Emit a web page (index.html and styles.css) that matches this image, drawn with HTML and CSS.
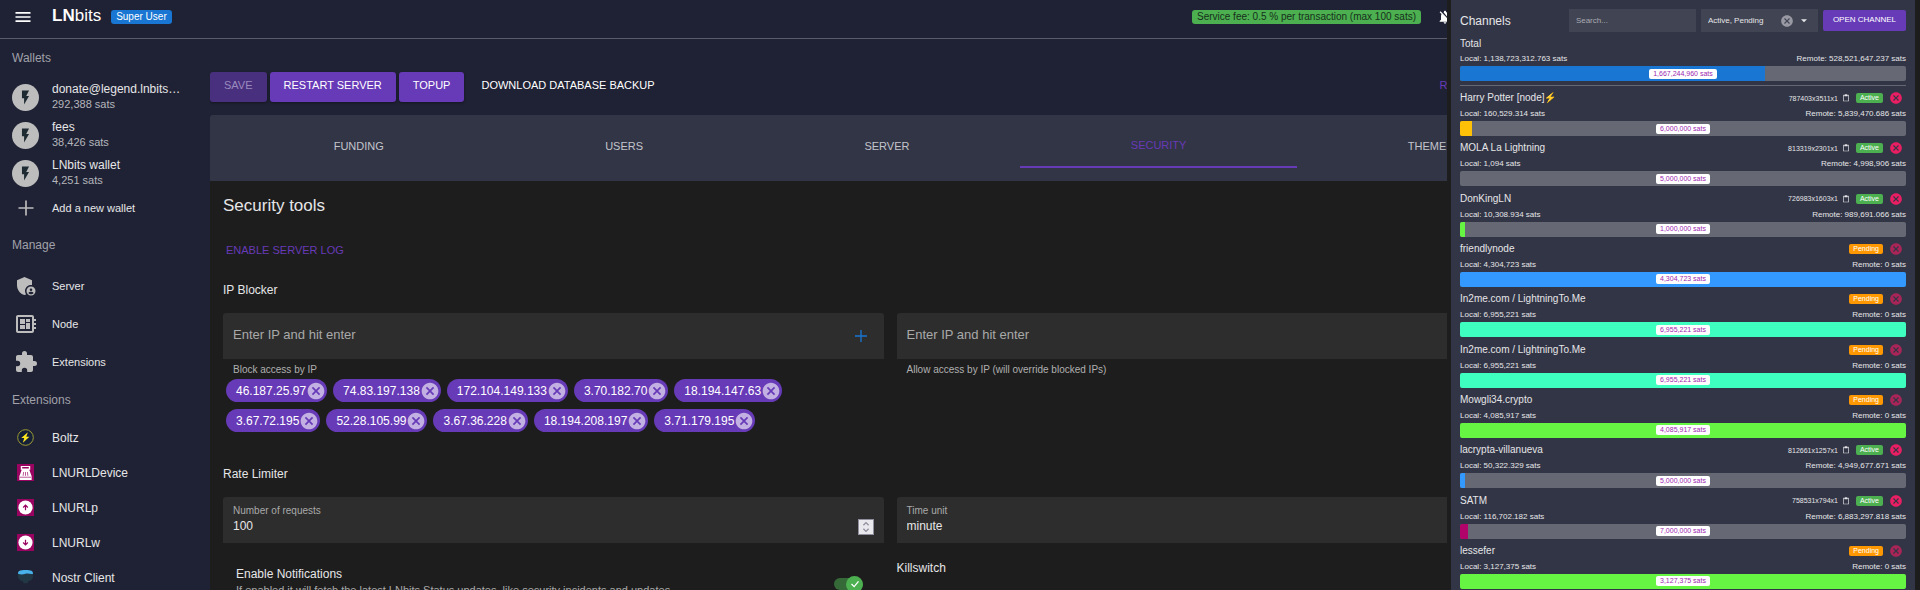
FILE: index.html
```html
<!DOCTYPE html>
<html lang="en">
<head>
<meta charset="utf-8">
<title>LNbits</title>
<link rel="stylesheet" href="styles.css">
</head>
<body>
<svg class="defs" aria-hidden="true">
  <symbol id="bolt" viewBox="0 0 24 24"><path d="M7 2v11h3v9l7-12h-4l4-8z"/></symbol>
  <symbol id="plus" viewBox="0 0 24 24"><path d="M21 13h-8v8h-2v-8H3v-2h8V3h2v8h8z"/></symbol>
  <symbol id="cancel" viewBox="0 0 24 24"><path d="M12 2C6.47 2 2 6.47 2 12s4.47 10 10 10 10-4.47 10-10S17.53 2 12 2zm5 13.59L15.59 17 12 13.41 8.41 17 7 15.59 10.59 12 7 8.41 8.41 7 12 10.59 15.59 7 17 8.41 13.41 12 17 15.59z"/></symbol>
  <symbol id="clip" viewBox="0 0 24 24"><path d="M19 2h-4.18C14.4.84 13.3 0 12 0S9.6.84 9.18 2H5c-1.1 0-2 .9-2 2v16c0 1.100.9 2 2 2h14c1.100 0 2-.9 2-2V4c0-1.100-.9-2-2-2zm0 18H5V4h2v3h10V4h2z"/></symbol>
</svg>
<div class="app">
  <header class="topbar">
    <button class="menu" type="button" aria-label="Menu"><svg viewBox="0 0 24 24"><path d="M3 18h18v-2H3zm0-5h18v-2H3zm0-7v2h18V6z"/></svg></button>
    <a class="brand" href="#"><b>LN</b>bits</a>
    <span class="badge user">Super User</span>
    <span class="badge fee">Service fee: 0.5 % per transaction (max 100 sats)</span>
    <button class="bell" type="button" aria-label="Notifications off"><svg viewBox="0 0 24 24"><path d="M20 18.690L7.840 6.140 5.270 3.490 4 4.760l2.800 2.800v.010c-.520.990-.8 2.160-.8 3.420v5l-2 2v1h13.730l2 2L21 19.720zM12 22c1.110 0 2-.89 2-2h-4c0 1.110.89 2 2 2zm6-7.320V11c0-3.080-1.640-5.640-4.500-6.320V4c0-.83-.67-1.500-1.500-1.500s-1.500.67-1.500 1.500v.68c-.24.06-.47.15-.69.23z"/></svg></button>
  </header>

  <nav class="sidebar">
    <h2>Wallets</h2>
    <ul class="wallets">
      <li><a href="#"><span class="avatar"><svg><use href="#bolt"/></svg></span><span><strong>donate@legend.lnbits…</strong><small>292,388 sats</small></span></a></li>
      <li><a href="#"><span class="avatar"><svg><use href="#bolt"/></svg></span><span><strong>fees</strong><small>38,426 sats</small></span></a></li>
      <li><a href="#"><span class="avatar"><svg><use href="#bolt"/></svg></span><span><strong>LNbits wallet</strong><small>4,251 sats</small></span></a></li>
      <li class="new"><a href="#"><span class="slot"><svg class="plus"><use href="#plus"/></svg></span><em>Add a new wallet</em></a></li>
    </ul>
    <h2 class="manage-title">Manage</h2>
    <ul class="manage">
      <li><a href="#"><span class="slot"><svg viewBox="0 0 24 24"><path d="M17 11c.34 0 .67.04 1 .090V6.270L10.500 3 3 6.270v4.910c0 4.540 3.200 8.790 7.500 9.820.55-.13 1.080-.32 1.600-.55A5.990 5.990 0 0 1 11 17c0-3.310 2.690-6 6-6z"/><path fill-rule="evenodd" d="M17 12.500a4.500 4.500 0 1 0 0 9 4.500 4.500 0 0 0 0-9zm0 2a1.300 1.300 0 1 1 0 2.600 1.300 1.300 0 0 1 0-2.600zm0 5.800c-1.100 0-2-.5-2.600-1.400.1-.8 1.700-1.200 2.600-1.200s2.500.4 2.600 1.200c-.6.9-1.500 1.400-2.600 1.400z"/></svg></span><em>Server</em></a></li>
      <li><a href="#"><span class="slot"><svg viewBox="0 0 24 24"><path d="M22 9V7h-2V5c0-1.100-.9-2-2-2H4c-1.100 0-2 .9-2 2v14c0 1.100.9 2 2 2h14c1.100 0 2-.9 2-2v-2h2v-2h-2v-2h2v-2h-2V9zm-4 10H4V5h14zM6 13h5v4H6zm6-6h4v3h-4zM6 7h5v5H6zm6 4h4v6h-4z"/></svg></span><em>Node</em></a></li>
      <li><a href="#"><span class="slot"><svg viewBox="0 0 24 24"><path d="M20.500 11H19V7c0-1.100-.9-2-2-2h-4V3.500a2.500 2.500 0 0 0-5 0V5H4c-1.100 0-2 .9-2 2v3.800h1.500a2.700 2.700 0 0 1 0 5.400H2V20c0 1.100.9 2 2 2h3.800v-1.500a2.700 2.700 0 0 1 5.400 0V22H17c1.100 0 2-.9 2-2v-4h1.500a2.500 2.500 0 0 0 0-5z"/></svg></span><em>Extensions</em></a></li>
    </ul>
    <h2 class="exts-title">Extensions</h2>
    <ul class="exts">
      <li><a href="#"><span class="slot"><svg viewBox="0 0 18 18"><circle cx="9" cy="9" r="8.300" fill="#142038" stroke="#a5a033"/><path fill="#ffe81f" d="M11.500 3.500L4.500 9.600h3.200l-1.500 5 7-6.500h-3.400z"/></svg></span>Boltz</a></li>
      <li><a href="#"><span class="slot"><svg viewBox="0 0 18 18"><path fill="#98045f" d="M0 0h18v18H0z"/><path fill="#fff" fill-rule="evenodd" d="M4 2h10v4h-1l2.500 7v4h-13v-4L5 6H4zm1.500 1.200v1.600h7V3.200z"/><path stroke="#98045f" stroke-width=".7" d="M7 8.500l-.5 4M9 8.500v4M11 8.500l.5 4M3 14h12"/></svg></span>LNURLDevice</a></li>
      <li><a href="#"><span class="slot"><svg viewBox="0 0 18 18"><path fill="#98045f" d="M0 0h18v18H0z"/><circle cx="9" cy="9" r="7.500" fill="#fff"/><path fill="none" stroke="#98045f" stroke-width="1.300" d="M9 12V7M6.500 9L9 6.500 11.500 9"/></svg></span>LNURLp</a></li>
      <li><a href="#"><span class="slot"><svg viewBox="0 0 18 18"><path fill="#98045f" d="M0 0h18v18H0z"/><circle cx="9" cy="9" r="7.500" fill="#fff"/><path fill="none" stroke="#98045f" stroke-width="1.300" d="M9 6v5M6.500 9L9 11.500 11.500 9"/></svg></span>LNURLw</a></li>
      <li><a href="#"><span class="slot"><svg viewBox="0 0 18 18"><path fill="#213744" d="M1 4h16v5l-2 3-3 1-1 2H7l-1-2-3-1-2-3z"/><path fill="#49b1ea" d="M1 5c0-3 2-4 8-4s8 1 8 4c-3 1-5-1-8 0s-5 1-8 0z"/></svg></span>Nostr Client</a></li>
    </ul>
  </nav>

  <main class="main">
    <div class="actions">
      <button class="btn" type="button" disabled>SAVE</button>
      <button class="btn" type="button">RESTART SERVER</button>
      <button class="btn" type="button">TOPUP</button>
      <button class="btn flat" type="button">DOWNLOAD DATABASE BACKUP</button>
      <button class="btn flat reset" type="button">RESET TO DEFAULTS</button>
    </div>
    <div class="tabs" role="tablist">
      <button type="button" role="tab">FUNDING</button>
      <button type="button" role="tab">USERS</button>
      <button type="button" role="tab">SERVER</button>
      <button type="button" role="tab" aria-selected="true">SECURITY</button>
      <button type="button" role="tab">THEME</button>
    </div>
    <section class="panel">
      <h1>Security tools</h1>
      <button class="log" type="button">ENABLE SERVER LOG</button>
      <h3>IP Blocker</h3>
      <div class="pair">
        <div>
          <div class="field"><input type="text" aria-label="Blocked IP" aria-describedby="block-hint" placeholder="Enter IP and hit enter"><button class="add" type="button" aria-label="Add"><svg><use href="#plus"/></svg></button></div>
          <p class="hint" id="block-hint">Block access by IP</p>
          <div class="chips" id="chips"></div>
        </div>
        <div>
          <div class="field"><input type="text" aria-label="Allowed IP" aria-describedby="allow-hint" placeholder="Enter IP and hit enter"></div>
          <p class="hint" id="allow-hint">Allow access by IP (will override blocked IPs)</p>
        </div>
      </div>
      <h3>Rate Limiter</h3>
      <div class="pair">
        <div class="field stacked"><div><label for="requests">Number of requests</label><input id="requests" type="number" value="100"></div><button class="spin" type="button" aria-label="Change number"><svg viewBox="0 0 16 16"><path d="M5 6l3-3 3 3M5 10l3 3 3-3"/></svg></button></div>
        <div class="field stacked"><div><label for="unit">Time unit</label><select id="unit"><option>minute</option></select></div></div>
      </div>
      <div class="pair last">
        <div class="notify">
          <label for="notify"><strong>Enable Notifications</strong><small>If enabled it will fetch the latest LNbits Status updates, like security incidents and updates.</small></label>
          <span class="switch"><input id="notify" type="checkbox" checked><svg viewBox="0 0 16 16"><path d="M4 8l3 3 5-6"/></svg></span>
        </div>
        <h3>Killswitch</h3>
      </div>
    </section>
  </main>

  <aside class="channels">
    <div class="chan-head">
      <h2>Channels</h2>
      <input class="search" type="text" placeholder="Search..." aria-label="Search channels">
      <div class="filter"><select aria-label="Channel state"><option>Active, Pending</option></select><button type="button" aria-label="Clear"><svg><use href="#cancel"/></svg></button><svg class="caret" viewBox="0 0 10 10"><path d="M0 2h10L5 7z"/></svg></div>
      <button class="open" type="button">OPEN CHANNEL</button>
    </div>
    <div class="total" id="total"></div>
    <div class="list" id="list"></div>
  </aside>
</div>
<script src="app.js"></script>
</body>
</html>
```
FILE: styles.css
```css
* { box-sizing: border-box; }
body { margin: 0; font-family: "Liberation Sans", Arial, sans-serif; font-size: 12px; color: #e6e6e8; background: #1d1d1d; overflow: hidden; }
h1, h2, h3, p, ul { margin: 0; padding: 0; font-weight: 400; }
ul { list-style: none; }
a { color: inherit; text-decoration: none; }
svg { display: block; fill: currentColor; }
button, input, select { font: inherit; color: inherit; background: none; border: 0; margin: 0; padding: 0; outline: 0; appearance: none; }
.defs { display: none; }

.app { display: grid; grid-template-columns: 210px minmax(0, 1fr) 464px 5px; grid-template-rows: 39px minmax(0, 1fr); height: 100vh; overflow: hidden; }

.topbar { grid-column: 1 / 3; display: flex; align-items: center; padding: 0 0 4px 13px; margin-right: 4px; background: #1f2234; border-bottom: 1px solid #5a5c69; color: #fff; overflow: hidden; }
.menu svg { width: 20px; height: 20px; }
.brand { margin: 0 10px 2px 19px; font-size: 17px; }
.badge { padding: 0 5px; line-height: 14px; border-radius: 3px; font-size: 10px; }
.user { background: #1976d2; }
.fee { margin-left: auto; background: #4caf50; color: #16301b; }
.bell { width: 10px; margin-left: 16px; overflow: hidden; }
.bell svg { width: 16px; height: 16px; }

.sidebar { grid-column: 1; grid-row: 2; padding-top: 6px; background: #1f2234; overflow: hidden; }
.sidebar h2 { padding-left: 12px; line-height: 26px; font-size: 12px; color: #a0a1aa; }
.sidebar a { display: flex; align-items: center; gap: 13px; height: 100%; padding-left: 12px; }
.sidebar strong, .sidebar small { display: block; font-weight: 400; line-height: 15px; white-space: nowrap; }
.sidebar strong { font-size: 12px; }
.sidebar small { font-size: 11px; color: #b5b6bc; }
.sidebar em { font-style: normal; font-size: 11px; }
.wallets { padding-top: 7px; }
.wallets li { height: 38px; }
.wallets .new { height: 32px; }
.avatar, .slot { display: grid; place-items: center; flex: none; width: 27px; height: 27px; }
.avatar { border-radius: 50%; background: #bdbdbd; color: #1f2b32; }
.avatar svg { width: 17px; height: 17px; }
.slot { color: #bdbdbd; }
.slot svg { width: 24px; height: 24px; }
.slot .plus { width: 20px; height: 20px; }
.sidebar .manage-title { padding-top: 8px; }
.sidebar .exts-title { padding-top: 6px; }
.manage { padding-top: 9px; }
.manage li { height: 38px; }
.exts { padding-top: 7px; }
.exts li { height: 35px; }
.exts svg { width: 17px; height: 17px; }

.main { grid-column: 2; grid-row: 2; margin-right: 4px; overflow: hidden; background: #1f2234; display: grid; grid-template-columns: 1360px; grid-template-rows: auto auto 1fr; }
.actions { display: flex; gap: 3px; padding: 33px 3px 13px 0; }
.btn { height: 30px; padding: 0 14px 4px; border-radius: 3px; background: #673ab7; box-shadow: 0 1px 3px #0006; color: #fff; font-size: 11px; white-space: nowrap; }
.btn:disabled { background: #49307f; color: #9a8bbd; }
.btn.flat { background: none; box-shadow: none; }
.btn.reset { margin-left: auto; color: #673ab7; }
.tabs { display: flex; height: 66px; padding: 0 13px 13px; background: #323546; border-radius: 3px 3px 0 0; }
.tabs button { flex: 1 1 auto; padding-top: 8px; font-size: 11px; color: #c3c4cb; }
.tabs [aria-selected] { color: #673ab7; border-bottom: 2px solid #673ab7; }
.panel { padding: 15px 13px 0; background: #1d1d1d; }
h1 { font-size: 17px; line-height: 20px; }
.log { display: block; margin: 26px 3px 0; font-size: 11px; line-height: 16px; color: #673ab7; }
h3 { font-size: 12px; line-height: 16px; }
.log + h3 { margin: 24px 0 15px; }
.pair { display: grid; grid-template-columns: 1fr 1fr; gap: 13px; }
.field { display: flex; align-items: center; height: 46px; padding: 0 15px 0 10px; background: #2d2d2d; border-radius: 3px 3px 0 0; }
.field input { flex: 1; min-width: 0; font-size: 13px; padding-bottom: 4px; }
.field input::placeholder { color: #a9a9a9; opacity: 1; }
.add { color: #1976d2; }
.add svg { width: 16px; height: 16px; }
.hint { padding: 4px 10px 0; font-size: 10px; line-height: 14px; color: #b0b0b0; }
.chips { display: flex; flex-wrap: wrap; gap: 7px 6px; padding: 2px 3px 0; max-width: 580px; }
.chip { display: flex; align-items: center; height: 23px; padding: 0 1px 0 10px; border-radius: 12px; background: #673ab7; color: #fff; }
.chip button, .chip svg { width: 20px; height: 20px; }
.chip button { color: #c2b0e2; }
.pair + h3 { margin: 34px 0 15px; }
.stacked > div { flex: 1; }
.stacked label { display: block; font-size: 10px; line-height: 14px; color: #a9a9a9; }
.stacked input, .stacked select { display: block; width: 100%; padding: 0 0 2px; font-size: 12px; line-height: 16px; }
.stacked input::-webkit-inner-spin-button { appearance: none; }
.spin { align-self: flex-end; margin: 0 -5px 8px 0; background: #e9e9ed; border: 1px solid #8f8f9d; }
.spin svg, .switch svg { fill: none; stroke: #8f8f9d; stroke-width: 1.5; width: 14px; height: 14px; }
.last { padding-top: 17px; }
.notify { display: flex; justify-content: space-between; padding: 6px 21px 0 13px; }
.notify strong, .notify small { display: block; font-weight: 400; font-size: 12px; line-height: 16px; }
.notify small { font-size: 11px; color: #a9a9a9; white-space: nowrap; }
.switch { display: flex; align-items: center; justify-content: flex-end; width: 29px; height: 12px; margin-top: 12px; border-radius: 6px; background: #356a38; position: relative; }
.switch input { width: 17px; height: 17px; border-radius: 50%; background: #4caf50; }
.switch svg { position: absolute; right: 1px; stroke: #fff; pointer-events: none; }

.channels { grid-column: 3; grid-row: 1 / 3; display: flex; flex-direction: column; padding: 9px 9px 1px; background: #323546; overflow: hidden; }
.chan-head { display: flex; align-items: center; gap: 5px; height: 23px; font-size: 8px; }
.chan-head h2 { flex: 1; font-size: 12px; }
.search { width: 127px; height: 23px; padding: 0 7px; background: #414453; }
.search::placeholder { color: #a9aab2; opacity: 1; }
.filter { display: flex; align-items: center; gap: 7px; width: 117px; height: 23px; padding: 0 11px 0 7px; background: #414453; }
.filter select { flex: 1; min-width: 0; }
.filter button svg { width: 14px; height: 14px; color: #9899a2; }
.filter .caret { width: 6px; height: 6px; }
.open { height: 21px; padding: 0 10px 2px; border-radius: 2px; background: #673ab7; color: #fff; }
.total { padding: 5px 0 4px; border-bottom: 1px solid #656772; margin-bottom: 3px; }
.list { flex: 1; display: flex; flex-direction: column; justify-content: space-between; }
.row { display: flex; align-items: center; justify-content: space-between; }
.name { font-size: 10px; line-height: 14px; }
.zap { color: #ffa62b; }
.title { height: 18px; }
.meta { display: flex; align-items: center; font-size: 7px; }
.meta > svg { width: 8px; height: 8px; margin: 0 6px 0 4px; }
.tag { padding: 0 4px; line-height: 10px; border-radius: 2px; background: #4caf50; color: #fff; }
.tag.pending { background: #ff9800; }
.meta button { margin: 0 3px 0 6px; color: #e91e63; }
.meta .pending + button { opacity: .65; }
.meta button svg { width: 14px; height: 14px; }
.amounts { font-size: 8px; line-height: 10px; padding: 2px 0; }
.total .amounts { padding-top: 3px; }
.bar { display: grid; align-items: center; height: 15px; border-radius: 2px; background: #666873; overflow: hidden; }
.bar > * { grid-area: 1 / 1; }
.fill { height: 15px; background: var(--tint); }
.cap { justify-self: center; padding: 0 4px; border-radius: 2px; background: #fff; color: #9c27b0; font-size: 7px; line-height: 10px; }
```
FILE: app.js
```js
const ips = ["46.187.25.97", "74.83.197.138", "172.104.149.133", "3.70.182.70", "18.194.147.63", "3.67.72.195", "52.28.105.99", "3.67.36.228", "18.194.208.197", "3.71.179.195"];
const cancel = '<svg><use href="#cancel"/></svg>';
document.getElementById("chips").innerHTML = ips.map(ip =>
  `<span class="chip">${ip}<button type="button" aria-label="Remove ${ip}">${cancel}</button></span>`).join("");

// name, short id, local, remote, capacity, filled percent, bar colour
const channels = [
  ["Harry Potter [node]⚡", "787403x3511x1", "160,529.314", "5,839,470.686", "6,000,000", 2.7, "#ffc107"],
  ["MOLA La Lightning", "813319x2301x1", "1,094", "4,998,906", "5,000,000", 0, "#ffc107"],
  ["DonKingLN", "726983x1603x1", "10,308.934", "989,691.066", "1,000,000", 1.1, "#66f542"],
  ["friendlynode", "", "4,304,723", "0", "4,304,723", 100, "#3399ff"],
  ["In2me.com / LightningTo.Me", "", "6,955,221", "0", "6,955,221", 100, "#3fffc0"],
  ["In2me.com / LightningTo.Me", "", "6,955,221", "0", "6,955,221", 100, "#3fffc0"],
  ["Mowgli34.crypto", "", "4,085,917", "0", "4,085,917", 100, "#66f542"],
  ["lacrypta-villanueva", "812661x1257x1", "50,322.329", "4,949,677.671", "5,000,000", 1.1, "#3399ff"],
  ["SATM", "758531x794x1", "116,702.182", "6,883,297.818", "7,000,000", 1.7, "#b0046a"],
  ["lessefer", "", "3,127,375", "0", "3,127,375", 100, "#66f542"]
];
const bolt = '<span class="zap">⚡</span>';
const balance = (local, remote, cap, pct, tint) => `
  <div class="row amounts"><span>Local: ${local} sats</span><span>Remote: ${remote} sats</span></div>
  <div class="bar"><span class="fill" style="width:${pct}%;--tint:${tint}"></span><span class="cap">${cap} sats</span></div>`;
document.getElementById("total").innerHTML =
  `<div class="name">Total</div>${balance("1,138,723,312.763", "528,521,647.237", "1,667,244,960", 68.3, "#1976d2")}`;
document.getElementById("list").innerHTML =
  channels.map(([name, id, ...rest]) => `<div class="chan">
    <div class="row title"><span class="name">${name.replace("⚡", bolt)}</span><span class="meta">${id
      ? `${id}<svg><use href="#clip"/></svg><span class="tag">Active</span>`
      : '<span class="tag pending">Pending</span>'}<button type="button" aria-label="Close channel">${cancel}</button></span></div>
    ${balance(...rest)}</div>`).join("");
```
